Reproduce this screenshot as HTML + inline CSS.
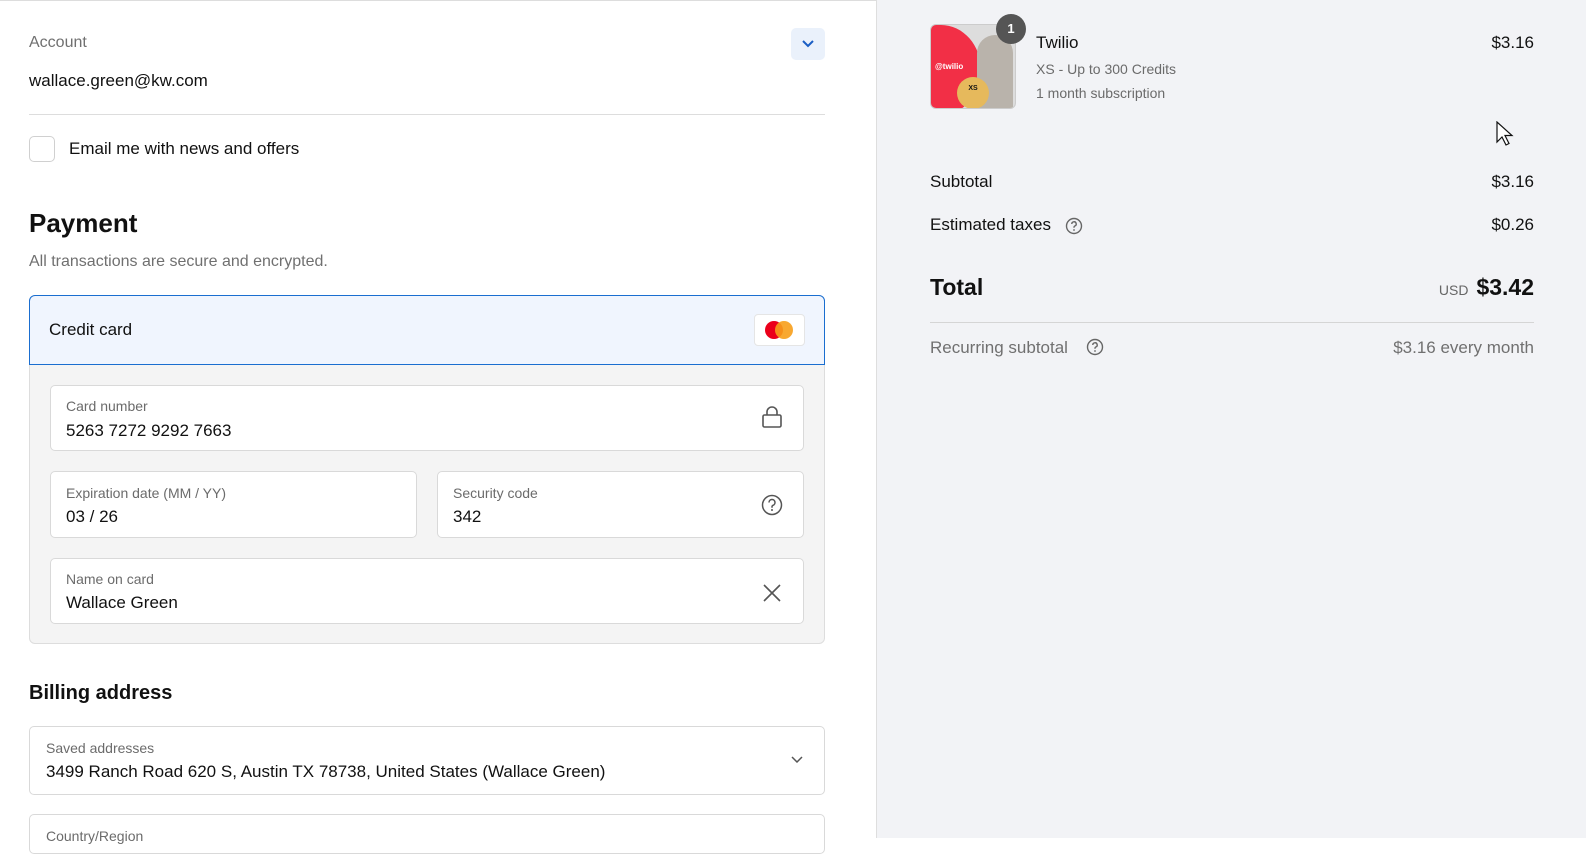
<!DOCTYPE html>
<html><head><meta charset="utf-8"><style>
*{box-sizing:border-box;margin:0;padding:0}
body{width:1586px;height:838px;overflow:hidden;background:#fff;font-family:"Liberation Sans",sans-serif;color:#111;position:relative}
.a{position:absolute;white-space:nowrap}
.right{position:absolute;left:876px;top:0;width:710px;height:838px;background:#f2f3f6;border-left:1px solid #dedede}
.top{position:absolute;left:0;top:0;width:1586px;height:1px;background:#ddd}
.fld{position:absolute;background:#fff;border:1px solid #d9d9d9;border-radius:5px}
.lbl{font-size:14px;color:#6b6b6b}
.val{font-size:17px;color:#111}
.r{text-align:right}
</style></head><body>
<div class="top"></div>
<div class="a" style="left:29px;top:34px;font-size:16px;color:#707070">Account</div>
<div class="a" style="left:791px;top:28px;width:34px;height:32px;background:#eaf1fb;border-radius:5px"></div>
<svg class="a" style="left:801px;top:38px" width="14" height="12"><path d="M2 3l5 5 5-5" stroke="#1a5ec4" stroke-width="2" fill="none"/></svg>
<div class="a" style="left:29px;top:71px;font-size:17px">wallace.green@kw.com</div>
<div class="a" style="left:29px;top:114px;width:796px;height:1px;background:#ddd"></div>
<div class="a" style="left:29px;top:136px;width:26px;height:26px;border:1px solid #d0d0d0;border-radius:5px"></div>
<div class="a" style="left:69px;top:139px;font-size:17px">Email me with news and offers</div>
<div class="a" style="left:29px;top:208px;font-size:26px;font-weight:bold">Payment</div>
<div class="a" style="left:29px;top:253px;font-size:16px;color:#707070">All transactions are secure and encrypted.</div>
<div class="a" style="left:29px;top:295px;width:796px;height:349px;background:#f4f4f4;border:1px solid #ddd;border-radius:6px"></div>
<div class="a" style="left:29px;top:295px;width:796px;height:70px;background:#f0f5fe;border:1px solid #1a6ed0;border-radius:6px 6px 0 0"></div>
<div class="a" style="left:49px;top:320px;font-size:17px">Credit card</div>
<div class="a" style="left:754px;top:314px;width:51px;height:32px;background:#fff;border:1px solid #e5e5e5;border-radius:4px"></div>
<svg class="a" style="left:762px;top:320px" width="34" height="20"><circle cx="12" cy="10" r="9" fill="#eb001b"/><circle cx="22" cy="10" r="9" fill="#f79e1b" opacity=".9"/></svg>
<div class="fld" style="left:50px;top:385px;width:754px;height:66px"></div>
<div class="a lbl" style="left:66px;top:398px">Card number</div>
<div class="a val" style="left:66px;top:421px">5263 7272 9292 7663</div>
<svg class="a" style="left:761px;top:405px" width="22" height="24"><rect x="2" y="10" width="18" height="12" rx="1.5" fill="none" stroke="#555" stroke-width="1.6"/><path d="M6 10V7a5 5 0 0 1 10 0v3" fill="none" stroke="#555" stroke-width="1.6"/></svg>
<div class="fld" style="left:50px;top:471px;width:367px;height:67px"></div>
<div class="a lbl" style="left:66px;top:485px">Expiration date (MM / YY)</div>
<div class="a val" style="left:66px;top:507px">03 / 26</div>
<div class="fld" style="left:437px;top:471px;width:367px;height:67px"></div>
<div class="a lbl" style="left:453px;top:485px">Security code</div>
<div class="a val" style="left:453px;top:507px">342</div>
<svg class="a" style="left:761px;top:494px" width="22" height="22"><circle cx="11" cy="11" r="9.5" fill="none" stroke="#555" stroke-width="1.5"/><path d="M8 8.5a3 3 0 1 1 4 2.8c-.7.3-1 .8-1 1.5v1" fill="none" stroke="#555" stroke-width="1.5"/><circle cx="11" cy="16" r="1" fill="#555"/></svg>
<div class="fld" style="left:50px;top:558px;width:754px;height:66px"></div>
<div class="a lbl" style="left:66px;top:571px">Name on card</div>
<div class="a val" style="left:66px;top:593px">Wallace Green</div>
<svg class="a" style="left:762px;top:583px" width="20" height="20"><path d="M2 2l16 16M18 2L2 18" stroke="#555" stroke-width="1.6"/></svg>
<div class="a" style="left:29px;top:682px;font-size:20px;font-weight:bold">Billing address</div>
<div class="fld" style="left:29px;top:726px;width:796px;height:69px"></div>
<div class="a lbl" style="left:46px;top:740px">Saved addresses</div>
<div class="a val" style="left:46px;top:762px">3499 Ranch Road 620 S, Austin TX 78738, United States (Wallace Green)</div>
<svg class="a" style="left:790px;top:755px" width="14" height="10"><path d="M2 2l5 5 5-5" stroke="#555" stroke-width="1.5" fill="none"/></svg>
<div class="fld" style="left:29px;top:814px;width:796px;height:40px"></div>
<div class="a lbl" style="left:46px;top:828px">Country/Region</div>

<div class="right"></div>
<div class="a" style="left:930px;top:24px;width:86px;height:85px;border-radius:6px;overflow:hidden;background:#ddd;border:1px solid #ccc">
<div style="position:absolute;left:-30px;top:0;width:80px;height:90px;background:#f22f46;border-radius:0 50% 50% 0"></div>
<div style="position:absolute;left:46px;top:10px;width:36px;height:76px;background:#b9b3ab;border-radius:18px 18px 0 0"></div>
<div style="position:absolute;left:4px;top:37px;color:#fff;font-size:8px;font-weight:bold">@twilio</div>
<div style="position:absolute;left:26px;top:52px;width:32px;height:32px;border-radius:50%;background:#e6b95c;font-size:7px;text-align:center;padding-top:8px;font-weight:bold">XS</div>
</div>
<div class="a" style="left:996px;top:14px;width:30px;height:30px;border-radius:50%;background:#555;color:#fff;font-size:13px;font-weight:bold;text-align:center;line-height:30px">1</div>
<div class="a" style="left:1036px;top:33px;font-size:17px">Twilio</div>
<div class="a" style="left:1036px;top:61px;font-size:14px;color:#6b6b6b">XS - Up to 300 Credits</div>
<div class="a" style="left:1036px;top:85px;font-size:14px;color:#6b6b6b">1 month subscription</div>
<div class="a r" style="right:52px;top:33px;font-size:17px">$3.16</div>
<svg class="a" style="left:1496px;top:121px" width="20" height="28"><path d="M1 1v20l5-5 4 8 3-1.5-4-8h7z" fill="#fff" stroke="#111" stroke-width="1.2"/></svg>
<div class="a" style="left:930px;top:172px;font-size:17px">Subtotal</div>
<div class="a r" style="right:52px;top:172px;font-size:17px">$3.16</div>
<div class="a" style="left:930px;top:215px;font-size:17px">Estimated taxes</div>
<svg class="a" style="left:1065px;top:217px" width="18" height="18"><circle cx="9" cy="9" r="7.5" fill="none" stroke="#666" stroke-width="1.4"/><path d="M6.8 7a2.2 2.2 0 1 1 3 2c-.6.3-.8.6-.8 1.2v.6" fill="none" stroke="#666" stroke-width="1.4"/><circle cx="9" cy="13" r=".9" fill="#666"/></svg>
<div class="a r" style="right:52px;top:215px;font-size:17px">$0.26</div>
<div class="a" style="left:930px;top:274px;font-size:23px;font-weight:bold">Total</div>
<div class="a r" style="right:52px;top:274px;font-size:23px;font-weight:bold"><span style="font-size:14px;font-weight:normal;color:#666;margin-right:8px">USD</span>$3.42</div>
<div class="a" style="left:930px;top:322px;width:604px;height:1px;background:#d5d5d5"></div>
<div class="a" style="left:930px;top:338px;font-size:17px;color:#707070">Recurring subtotal</div>
<svg class="a" style="left:1086px;top:338px" width="18" height="18"><circle cx="9" cy="9" r="7.5" fill="none" stroke="#666" stroke-width="1.4"/><path d="M6.8 7a2.2 2.2 0 1 1 3 2c-.6.3-.8.6-.8 1.2v.6" fill="none" stroke="#666" stroke-width="1.4"/><circle cx="9" cy="13" r=".9" fill="#666"/></svg>
<div class="a r" style="right:52px;top:338px;font-size:17px;color:#707070">$3.16 every month</div>
</body></html>
